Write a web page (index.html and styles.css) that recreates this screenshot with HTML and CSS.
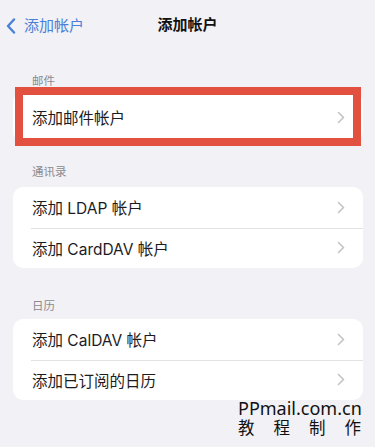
FILE: index.html
```html
<!DOCTYPE html>
<html lang="zh-CN">
<head>
<meta charset="utf-8">
<title>添加帐户</title>
<link rel="stylesheet" href="styles.css">
</head>
<body>
<div class="screen">
  <header class="nav">
    <div class="back">
      <svg class="back-icon" width="10" height="16" viewBox="0 0 10 16"><path d="M8 1.5 L2 8 L8 14.5" fill="none" stroke="currentColor" stroke-width="2.4" stroke-linecap="round" stroke-linejoin="round"/></svg>
      <span>添加帐户</span>
    </div>
    <div class="title">添加帐户</div>
  </header>

  <div class="section-label first">邮件</div>
  <div class="card card-mail">
    <div class="row tall"><span>添加邮件帐户</span><svg class="chev" width="8" height="13" viewBox="0 0 8 13"><path d="M1.5 1.5 L6.5 6.5 L1.5 11.5" fill="none" stroke="currentColor" stroke-width="1.6" stroke-linecap="round" stroke-linejoin="round"/></svg></div>
    <div class="highlight"></div>
  </div>

  <div class="section-label second">通讯录</div>
  <div class="card">
    <div class="row"><span>添加 LDAP 帐户</span><svg class="chev" width="8" height="13" viewBox="0 0 8 13"><path d="M1.5 1.5 L6.5 6.5 L1.5 11.5" fill="none" stroke="currentColor" stroke-width="1.6" stroke-linecap="round" stroke-linejoin="round"/></svg></div>
    <div class="row"><span>添加 CardDAV 帐户</span><svg class="chev" width="8" height="13" viewBox="0 0 8 13"><path d="M1.5 1.5 L6.5 6.5 L1.5 11.5" fill="none" stroke="currentColor" stroke-width="1.6" stroke-linecap="round" stroke-linejoin="round"/></svg></div>
  </div>

  <div class="section-label third">日历</div>
  <div class="card">
    <div class="row"><span>添加 CalDAV 帐户</span><svg class="chev" width="8" height="13" viewBox="0 0 8 13"><path d="M1.5 1.5 L6.5 6.5 L1.5 11.5" fill="none" stroke="currentColor" stroke-width="1.6" stroke-linecap="round" stroke-linejoin="round"/></svg></div>
    <div class="row"><span>添加已订阅的日历</span><svg class="chev" width="8" height="13" viewBox="0 0 8 13"><path d="M1.5 1.5 L6.5 6.5 L1.5 11.5" fill="none" stroke="currentColor" stroke-width="1.6" stroke-linecap="round" stroke-linejoin="round"/></svg></div>
  </div>

  <div class="watermark">
    <div class="wm-url">PPmail.com.cn</div>
    <div class="wm-cn"><span>教</span><span>程</span><span>制</span><span>作</span></div>
  </div>
</div>
</body>
</html>
```

FILE: styles.css
```css
* { box-sizing: border-box; }
html, body { margin: 0; padding: 0; }
body {
  background: #f1f1f6;
  font-family: Inter, "Noto Sans CJK SC", sans-serif;
  color: #1d1d1f;
}
.screen {
  position: relative;
  width: 375px;
  height: 447px;
  overflow: hidden;
}
.nav {
  position: relative;
  height: 50px;
  display: flex;
  align-items: flex-start;
  justify-content: center;
  padding-top: 16px;
}
.back {
  position: absolute;
  left: 6px;
  top: 17px;
  display: flex;
  align-items: center;
  gap: 8px;
  color: #4a80d6;
  font-size: 15px;
  line-height: 18px;
}
.back-icon { display: block; }
.title {
  font-size: 15px;
  font-weight: 700;
  line-height: 18px;
  color: #111;
}
.section-label {
  font-size: 11.5px;
  line-height: 16px;
  color: #8b8b90;
  padding-left: 32px;
}
.section-label.first {
  margin-top: 23px;
  margin-bottom: 3px;
}
.section-label.second {
  margin-top: 22px;
  margin-bottom: 7px;
}
.section-label.third {
  margin-top: 30px;
  margin-bottom: 5px;
}
.card {
  position: relative;
  background: #fff;
  border-radius: 10px;
  margin: 0 12px 0 13px;
}
.row {
  height: 40.5px;
  display: flex;
  align-items: center;
  justify-content: space-between;
  padding: 0 18px 0 19px;
  font-size: 15.5px;
  color: #1c1c1e;
  position: relative;
}
.row + .row::before {
  content: "";
  position: absolute;
  left: 18px;
  right: 0;
  top: 0;
  border-top: 1px solid #e3e3e6;
}
.row.tall { height: 50px; }
.chev { color: #c3c3c8; display: block; }
.highlight {
  position: absolute;
  left: 2px;
  right: 2px;
  top: -5px;
  bottom: -4px;
  border: 8px solid #e2513f;
  pointer-events: none;
}
.watermark {
  position: absolute;
  left: 238px;
  top: 398px;
  width: 123px;
  font-family: "Noto Sans", "Noto Sans CJK SC", sans-serif;
  color: #111;
}
.wm-url {
  font-size: 18px;
  line-height: 20px;
}
.wm-cn {
  display: flex;
  justify-content: space-between;
  font-family: "Noto Sans CJK SC", sans-serif;
  font-size: 16.5px;
  line-height: 18px;
}
```
